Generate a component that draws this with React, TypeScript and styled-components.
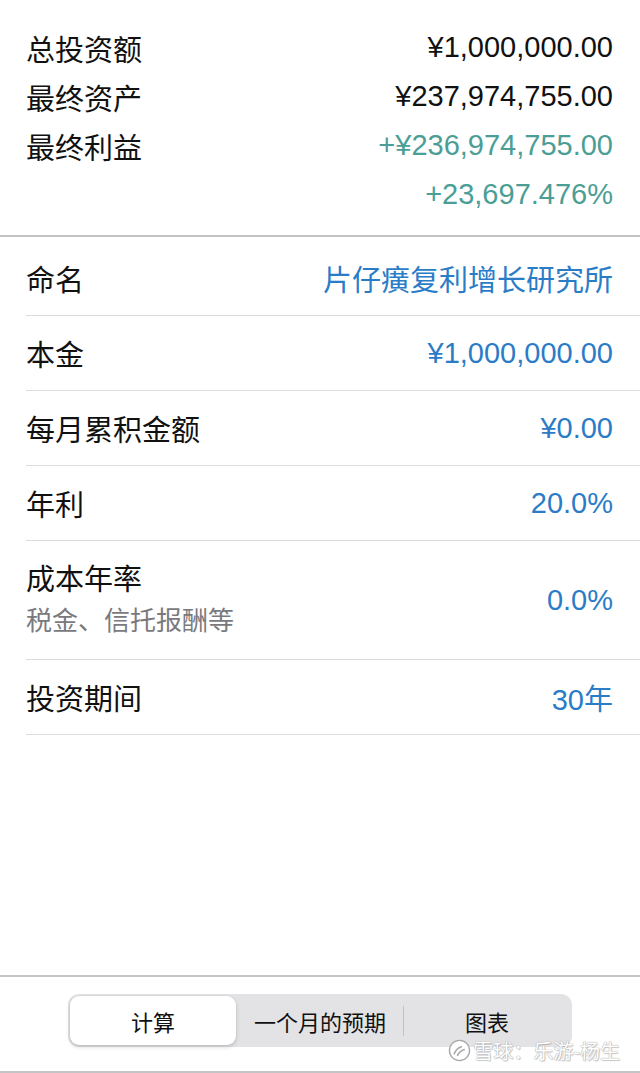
import { Fragment } from 'react'
import styled, { createGlobalStyle } from 'styled-components'

const GlobalStyle = createGlobalStyle`
  html, body {
    margin: 0;
    padding: 0;
    background: #ffffff;
  }
  body {
    font-family: "Liberation Sans", "Noto Sans CJK SC", sans-serif;
    color: #111111;
    -webkit-font-smoothing: antialiased;
  }
`

const colors = {
  text: '#111111',
  blue: '#2b7cc7',
  teal: '#4b9e95',
  sub: '#7a7a7e',
  line: '#dcdcdf',
  heavyLine: '#c4c4c7',
}

const Page = styled.div`
  display: flex;
  flex-direction: column;
  min-height: 100vh;
`

const Summary = styled.section`
  padding: 23px 27px 16px 26px;
  border-bottom: 2px solid ${colors.heavyLine};
`

const SummaryRow = styled.div`
  display: flex;
  justify-content: space-between;
  align-items: center;
  height: 49px;
  font-size: 29px;
`

const SummaryValue = styled.span<{ $tone?: 'teal' }>`
  color: ${({ $tone }) => ($tone === 'teal' ? colors.teal : colors.text)};
`

const List = styled.section`
  padding-top: 4px;
`

const Row = styled.div<{ $tall?: boolean }>`
  display: flex;
  justify-content: space-between;
  align-items: center;
  margin-left: 26px;
  padding-right: 27px;
  height: ${({ $tall }) => ($tall ? '118px' : '74px')};
  border-bottom: 1px solid ${colors.line};
  font-size: 29px;
`

const LabelBlock = styled.div`
  display: flex;
  flex-direction: column;
  gap: 4px;
`

const Label = styled.span`
  line-height: 38px;
`

const SubLabel = styled.span`
  font-size: 26px;
  line-height: 36px;
  color: ${colors.sub};
`

const Value = styled.span`
  color: ${colors.blue};
`

const Spacer = styled.div`
  flex: 1;
`

const BottomBar = styled.footer`
  position: relative;
  display: flex;
  justify-content: center;
  padding: 17px 0 24px;
  border-top: 2px solid ${colors.heavyLine};
  border-bottom: 2px solid ${colors.heavyLine};
`

const Segmented = styled.div`
  display: flex;
  align-items: center;
  width: 504px;
  height: 53px;
  padding: 2px;
  box-sizing: border-box;
  background: #e3e3e6;
  border-radius: 11px;
`

const Segment = styled.div<{ $active?: boolean }>`
  flex: 1;
  height: 100%;
  display: flex;
  align-items: center;
  justify-content: center;
  font-size: 22px;
  color: ${colors.text};
  border-radius: 9px;
  background: ${({ $active }) => ($active ? '#ffffff' : 'transparent')};
  box-shadow: ${({ $active }) =>
    $active ? '0 2px 4px rgba(0, 0, 0, 0.16), 0 0 0 0.5px rgba(0, 0, 0, 0.05)' : 'none'};
`

const Divider = styled.span<{ $hidden?: boolean }>`
  width: 1px;
  height: 30px;
  background: ${({ $hidden }) => ($hidden ? 'transparent' : '#c2c2c6')};
`

const Watermark = styled.div`
  position: absolute;
  right: 20px;
  bottom: 6px;
  display: flex;
  align-items: center;
  gap: 2px;
  font-size: 20px;
  color: #ffffff;
  text-shadow: 0 0 1px #a8a8a8, 0 0 1px #a8a8a8, 1px 1px 1px rgba(0, 0, 0, 0.2);
  pointer-events: none;
`

const LogoMark = () => (
  <svg width="23" height="23" viewBox="0 0 24 24" fill="none">
    <circle cx="12" cy="12" r="10.5" fill="#ffffff" stroke="#a8a8a8" strokeWidth="1.4" />
    <path d="M6.5 15.5c1.5-4 4-6.5 7.5-7.5" stroke="#a8a8a8" strokeWidth="1.6" strokeLinecap="round" />
    <path d="M10 17c1.5-3 3.5-5 7-6" stroke="#a8a8a8" strokeWidth="1.6" strokeLinecap="round" />
  </svg>
)

const segments = ['计算', '一个月的预期', '图表']

const fields = [
  { label: '命名', value: '片仔癀复利增长研究所' },
  { label: '本金', value: '¥1,000,000.00' },
  { label: '每月累积金额', value: '¥0.00' },
  { label: '年利', value: '20.0%' },
  { label: '成本年率', sub: '税金、信托报酬等', value: '0.0%' },
  { label: '投资期间', value: '30年' },
]

export default function App() {
  const active = 0
  return (
    <Page>
      <GlobalStyle />
      <Summary>
        <SummaryRow>
          <span>总投资额</span>
          <SummaryValue>¥1,000,000.00</SummaryValue>
        </SummaryRow>
        <SummaryRow>
          <span>最终资产</span>
          <SummaryValue>¥237,974,755.00</SummaryValue>
        </SummaryRow>
        <SummaryRow>
          <span>最终利益</span>
          <SummaryValue $tone="teal">+¥236,974,755.00</SummaryValue>
        </SummaryRow>
        <SummaryRow>
          <span />
          <SummaryValue $tone="teal">+23,697.476%</SummaryValue>
        </SummaryRow>
      </Summary>

      <List>
        {fields.map((f) => (
          <Row key={f.label} $tall={!!f.sub}>
            {f.sub ? (
              <LabelBlock>
                <Label>{f.label}</Label>
                <SubLabel>{f.sub}</SubLabel>
              </LabelBlock>
            ) : (
              <span>{f.label}</span>
            )}
            <Value>{f.value}</Value>
          </Row>
        ))}
      </List>

      <Spacer />

      <BottomBar>
        <Segmented>
          {segments.map((s, i) => (
            <Fragment key={s}>
              {i > 0 && <Divider $hidden={i === active || i - 1 === active} />}
              <Segment $active={i === active}>{s}</Segment>
            </Fragment>
          ))}
        </Segmented>
        <Watermark>
          <LogoMark />
          <span>雪球：乐游-杨生</span>
        </Watermark>
      </BottomBar>
    </Page>
  )
}
